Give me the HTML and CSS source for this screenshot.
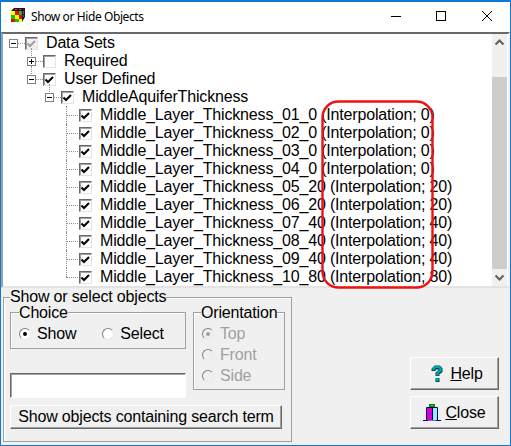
FILE: index.html
```html
<!DOCTYPE html>
<html lang="en">
<head>
<meta charset="utf-8">
<title>Show or Hide Objects</title>
<link rel="stylesheet" href="styles.css">
</head>
<body>
<div class="window">
  <header class="titlebar">
    <svg class="app-icon" width="16" height="16" viewBox="0 0 16 16">
      <path d="M4 0h11v9l-3 5H1V3z" fill="#1a1a1a"/>
      <rect x="1" y="3" width="4" height="4" fill="#ff0"/><rect x="5" y="3" width="4" height="4" fill="#f00"/><rect x="9" y="3" width="3" height="4" fill="#0c0"/>
      <rect x="1" y="7" width="4" height="4" fill="#0c0"/><rect x="5" y="7" width="4" height="4" fill="#ff0"/><rect x="9" y="7" width="3" height="4" fill="#f00"/>
      <rect x="1" y="11" width="4" height="3" fill="#f00"/><rect x="5" y="11" width="4" height="3" fill="#0c0"/><rect x="9" y="11" width="3" height="3" fill="#ff0"/>
      <path d="M5 1h2v1H5zM9 1h2v1H9zM13 3h1v3h-1z" fill="#e000e0"/><path d="M13 7h1v2h-1z" fill="#0060ff"/>
    </svg>
    <span class="title">Show or Hide Objects</span>
    <div class="controls">
      <svg width="12" height="12" viewBox="0 0 12 12"><path d="M0 6.500h10" stroke="#000"/></svg>
      <svg width="12" height="12" viewBox="0 0 12 12"><rect x="0.500" y="1.500" width="9" height="9" fill="none" stroke="#000"/></svg>
      <svg width="12" height="12" viewBox="0 0 12 12"><path d="M1 1l10 10M11 1L1 11" stroke="#000" fill="none"/></svg>
    </div>
  </header>

  <section class="tree-panel">
    <div class="tree">
      <div class="row l0"><i class="exp minus"></i><i class="box grey"><svg viewBox="0 0 9 9"><path d="M.5 3.500l2.500 2.500L8 1" fill="none" stroke="#a0a0a0" stroke-width="2"/></svg></i><span>Data Sets</span></div>
      <div class="row l1"><i class="exp plus"></i><i class="box"></i><span>Required</span></div>
      <div class="row l1"><i class="exp minus"></i><i class="box"><svg viewBox="0 0 9 9"><path d="M.5 3.500l2.500 2.500L8 1" fill="none" stroke="#000" stroke-width="2"/></svg></i><span>User Defined</span></div>
      <div class="row l2"><i class="exp minus"></i><i class="box"><svg viewBox="0 0 9 9"><path d="M.5 3.500l2.500 2.500L8 1" fill="none" stroke="#000" stroke-width="2"/></svg></i><span>MiddleAquiferThickness</span></div>
      <div class="row l3"><i class="dots"></i><i class="box"><svg viewBox="0 0 9 9"><path d="M.5 3.500l2.500 2.500L8 1" fill="none" stroke="#000" stroke-width="2"/></svg></i><span>Middle_Layer_Thickness_01_0 (Interpolation; 0)</span></div>
      <div class="row l3"><i class="dots"></i><i class="box"><svg viewBox="0 0 9 9"><path d="M.5 3.500l2.500 2.500L8 1" fill="none" stroke="#000" stroke-width="2"/></svg></i><span>Middle_Layer_Thickness_02_0 (Interpolation; 0)</span></div>
      <div class="row l3"><i class="dots"></i><i class="box"><svg viewBox="0 0 9 9"><path d="M.5 3.500l2.500 2.500L8 1" fill="none" stroke="#000" stroke-width="2"/></svg></i><span>Middle_Layer_Thickness_03_0 (Interpolation; 0)</span></div>
      <div class="row l3"><i class="dots"></i><i class="box"><svg viewBox="0 0 9 9"><path d="M.5 3.500l2.500 2.500L8 1" fill="none" stroke="#000" stroke-width="2"/></svg></i><span>Middle_Layer_Thickness_04_0 (Interpolation; 0)</span></div>
      <div class="row l3"><i class="dots"></i><i class="box"><svg viewBox="0 0 9 9"><path d="M.5 3.500l2.500 2.500L8 1" fill="none" stroke="#000" stroke-width="2"/></svg></i><span>Middle_Layer_Thickness_05_20 (Interpolation; 20)</span></div>
      <div class="row l3"><i class="dots"></i><i class="box"><svg viewBox="0 0 9 9"><path d="M.5 3.500l2.500 2.500L8 1" fill="none" stroke="#000" stroke-width="2"/></svg></i><span>Middle_Layer_Thickness_06_20 (Interpolation; 20)</span></div>
      <div class="row l3"><i class="dots"></i><i class="box"><svg viewBox="0 0 9 9"><path d="M.5 3.500l2.500 2.500L8 1" fill="none" stroke="#000" stroke-width="2"/></svg></i><span>Middle_Layer_Thickness_07_40 (Interpolation; 40)</span></div>
      <div class="row l3"><i class="dots"></i><i class="box"><svg viewBox="0 0 9 9"><path d="M.5 3.500l2.500 2.500L8 1" fill="none" stroke="#000" stroke-width="2"/></svg></i><span>Middle_Layer_Thickness_08_40 (Interpolation; 40)</span></div>
      <div class="row l3"><i class="dots"></i><i class="box"><svg viewBox="0 0 9 9"><path d="M.5 3.500l2.500 2.500L8 1" fill="none" stroke="#000" stroke-width="2"/></svg></i><span>Middle_Layer_Thickness_09_40 (Interpolation; 40)</span></div>
      <div class="row l3 last"><i class="dots"></i><i class="box"><svg viewBox="0 0 9 9"><path d="M.5 3.500l2.500 2.500L8 1" fill="none" stroke="#000" stroke-width="2"/></svg></i><span>Middle_Layer_Thickness_10_80 (Interpolation; 80)</span></div>
    </div>
    <div class="scrollbar">
      <svg class="arrow" width="15" height="17" viewBox="0 0 15 17"><path d="M3.500 10.500l4-4 4 4" fill="none" stroke="#606060" stroke-width="2"/></svg>
      <div class="track"><div class="thumb"></div></div>
      <svg class="arrow" width="15" height="17" viewBox="0 0 15 17"><path d="M3.500 6.500l4 4 4-4" fill="none" stroke="#606060" stroke-width="2"/></svg>
    </div>
  </section>

  <section class="bottom">
    <fieldset class="group outer">
      <legend>Show or select objects</legend>
      <div class="top-groups">
        <div class="left-col">
          <fieldset class="group choice">
            <legend>Choice</legend>
            <label class="radio"><i class="dot on"></i>Show</label>
            <label class="radio"><i class="dot"></i>Select</label>
          </fieldset>
          <input class="search" type="text" aria-label="Search term">
        </div>
        <fieldset class="group orient">
          <legend>Orientation</legend>
          <label class="radio off"><i class="dot on"></i>Top</label>
          <label class="radio off"><i class="dot"></i>Front</label>
          <label class="radio off"><i class="dot"></i>Side</label>
        </fieldset>
      </div>
      <button class="btn search-btn" type="button">Show objects containing search term</button>
    </fieldset>
    <div class="actions">
      <button class="btn action help" type="button">
        <svg width="12" height="17" viewBox="0 0 12 17"><path d="M2.500 6V4.500L4.500 2.500H8L9.500 4V6L6.500 8.500V11" fill="none" stroke="#004850" stroke-width="4"/><path d="M2.500 5V4L4.500 2H8L9.500 3.500V5.500L6.500 8V10.500" fill="none" stroke="#00a8b0" stroke-width="2.200"/><rect x="4.500" y="13" width="4" height="4" fill="#004850"/><rect x="4.500" y="13" width="3" height="3" fill="#00a8b0"/></svg>
        <span><u>H</u>elp</span>
      </button>
      <button class="btn action close" type="button">
        <svg width="18" height="18" viewBox="0 0 18 18"><rect x="6.500" y="0.500" width="5" height="2" fill="#00e000" stroke="#008000"/><rect x="4" y="4" width="5" height="12" fill="#d800c8"/><rect x="9" y="4" width="5" height="12" fill="#90f0f0"/><path d="M3.500 16V3.500H14.500V16M9.500 4V16" stroke="#000080" fill="none"/><path d="M0 16.500H18" stroke="#000080"/><path d="M5 16.500H13" stroke="#808080"/></svg>
        <span><u>C</u>lose</span>
      </button>
    </div>
  </section>

  <svg class="callout" width="114" height="191" viewBox="0 0 114 191"><rect x="1.500" y="1.500" width="110" height="186" rx="16" fill="none" stroke="#ee1111" stroke-width="2.400"/></svg>
</div>
</body>
</html>
```
FILE: styles.css
```css
* { box-sizing: border-box; }
html, body { margin: 0; padding: 0; }
body { width: 511px; height: 446px; overflow: hidden; font-family: "Liberation Sans", Arial, sans-serif; font-size: 16px; letter-spacing: -0.17px; color: #000; }
i { display: block; font-style: normal; flex: none; }

.window { position: relative; width: 511px; height: 446px; border: 1px solid #0a7ad6; border-top-width: 2px; background: #f0f0f0; display: flex; flex-direction: column; }

.titlebar { height: 30px; flex: none; background: #fff; display: flex; align-items: center; padding: 0 0 2px 9px; }
.app-icon { flex: none; margin-right: 5px; }
.title { font-family: "Noto Sans", "Open Sans", sans-serif; font-size: 12px; letter-spacing: -0.4px; flex: 1; }
.controls { display: flex; gap: 33px; padding-right: 17px; }
.controls svg { display: block; }

.tree-panel { height: 256px; flex: none; display: flex; background: #fff; border-top: 2px solid #696969; border-left: 2px solid #a0a0a0; border-right: 2px solid #f0f0f0; border-bottom: 2px solid #e3e3e3; }
.tree { flex: 1; overflow: hidden; }
.row { height: 18px; display: flex; align-items: center; white-space: nowrap; line-height: 18px; position: relative; }
.row span { margin-left: 8px; }
.l0 { padding-left: 6px; }
.l1 { padding-left: 24px; }
.l2 { padding-left: 42px; }
.l3 { padding-left: 63px; }

.row::before { content: ""; position: absolute; top: 9px; width: 7px; border-top: 1px dotted #909090; }
.l0::before { left: 15px; }
.l1::before { left: 33px; }
.l2::before { left: 51px; }
.l3::before { left: 63px; top: 0; width: 0; height: 18px; border-top: 0; border-left: 1px dotted #909090; }
.l3.last::before { height: 9px; }
.l1::after, .l2::after { content: ""; position: absolute; top: -4px; height: 8px; border-left: 1px dotted #909090; }
.l1::after { left: 28px; }
.l2::after { left: 46px; }

.exp { width: 9px; height: 9px; border: 1px solid #808080; background: #fff; position: relative; margin-right: 7px; z-index: 1; }
.exp::before { content: ""; position: absolute; left: 1px; top: 3px; width: 5px; height: 1px; background: #000; }
.plus::after { content: ""; position: absolute; left: 3px; top: 1px; width: 1px; height: 5px; background: #000; }
.dots { width: 12px; height: 1px; margin: 1px 1px 0 0; border-top: 1px dotted #909090; }

.box { width: 13px; height: 13px; background: #fff; border: 1px solid; border-color: #696969 #e3e3e3 #e3e3e3 #696969; box-shadow: inset 1px 1px 0 #a0a0a0; padding: 1px; }
.box.grey { background: #f0f0f0; }
.box svg { display: block; width: 9px; height: 9px; margin: 1px 0 0 0; }

.scrollbar { width: 15px; flex: none; margin-right: 1px; background: #f0f0f0; display: flex; flex-direction: column; }
.arrow { flex: none; display: block; }
.track { flex: 1; padding-top: 26px; display: flex; }
.thumb { flex: 1; background: #cdcdcd; }

.bottom { flex: 1; display: flex; min-height: 0; padding-left: 2px; }
.group { margin: 0; border: 1px solid #a0a0a0; box-shadow: inset 1px 1px 0 #fff; }
.group legend { padding: 1px 0 0; line-height: 14px; }
.outer { width: 286px; height: 153px; padding: 0 6px; margin-top: 1px; }
.group.outer > legend { padding: 0; line-height: 16px; }
.top-groups { display: flex; gap: 7px; height: 93px; }
.left-col { width: 176px; flex: none; }
.choice { height: 44px; width: 176px; padding: 3px 0 0 8px; display: flex; gap: 26px; }
.orient { width: 88px; height: 85px; padding: 3px 7px 0; flex: none; }
.radio { display: flex; align-items: center; gap: 6px; height: 21px; }
.orient .radio { margin-left: 1px; }
.off { color: #a0a0a0; }
.dot { width: 12px; height: 12px; border-radius: 50%; background: #fff; border: 1px solid; border-color: #808080 #e8e8e8 #e8e8e8 #808080; position: relative; }
.dot.on::after { content: ""; position: absolute; left: 3px; top: 3px; width: 4px; height: 4px; border-radius: 50%; background: #000; }
.off .dot { background: #f0f0f0; }
.off .dot.on::after { background: #a0a0a0; }
.search { display: block; width: 176px; height: 25px; margin-top: 24px; background: #fff; border: 1px solid; border-color: #696969 #fff #fff #696969; box-shadow: inset 1px 1px 0 #a0a0a0; padding: 0; }

.btn { font-family: inherit; font-size: 16px; letter-spacing: inherit; color: #000; background: #f0f0f0; padding: 0; border: 1px solid; border-color: #fff #696969 #696969 #fff; box-shadow: inset -1px -1px 0 #a0a0a0; }
.search-btn { display: block; width: 272px; height: 24px; margin-top: 7px; white-space: nowrap; }

.actions { flex: 1; display: flex; flex-direction: column; align-items: flex-end; gap: 6px; padding: 69px 11px 0 0; }
.action { width: 89px; height: 33px; display: flex; align-items: center; justify-content: center; }
.help { gap: 7px; padding-left: 5px; }
.close { gap: 4px; }

.callout { position: absolute; left: 320px; top: 98px; pointer-events: none; }
```
